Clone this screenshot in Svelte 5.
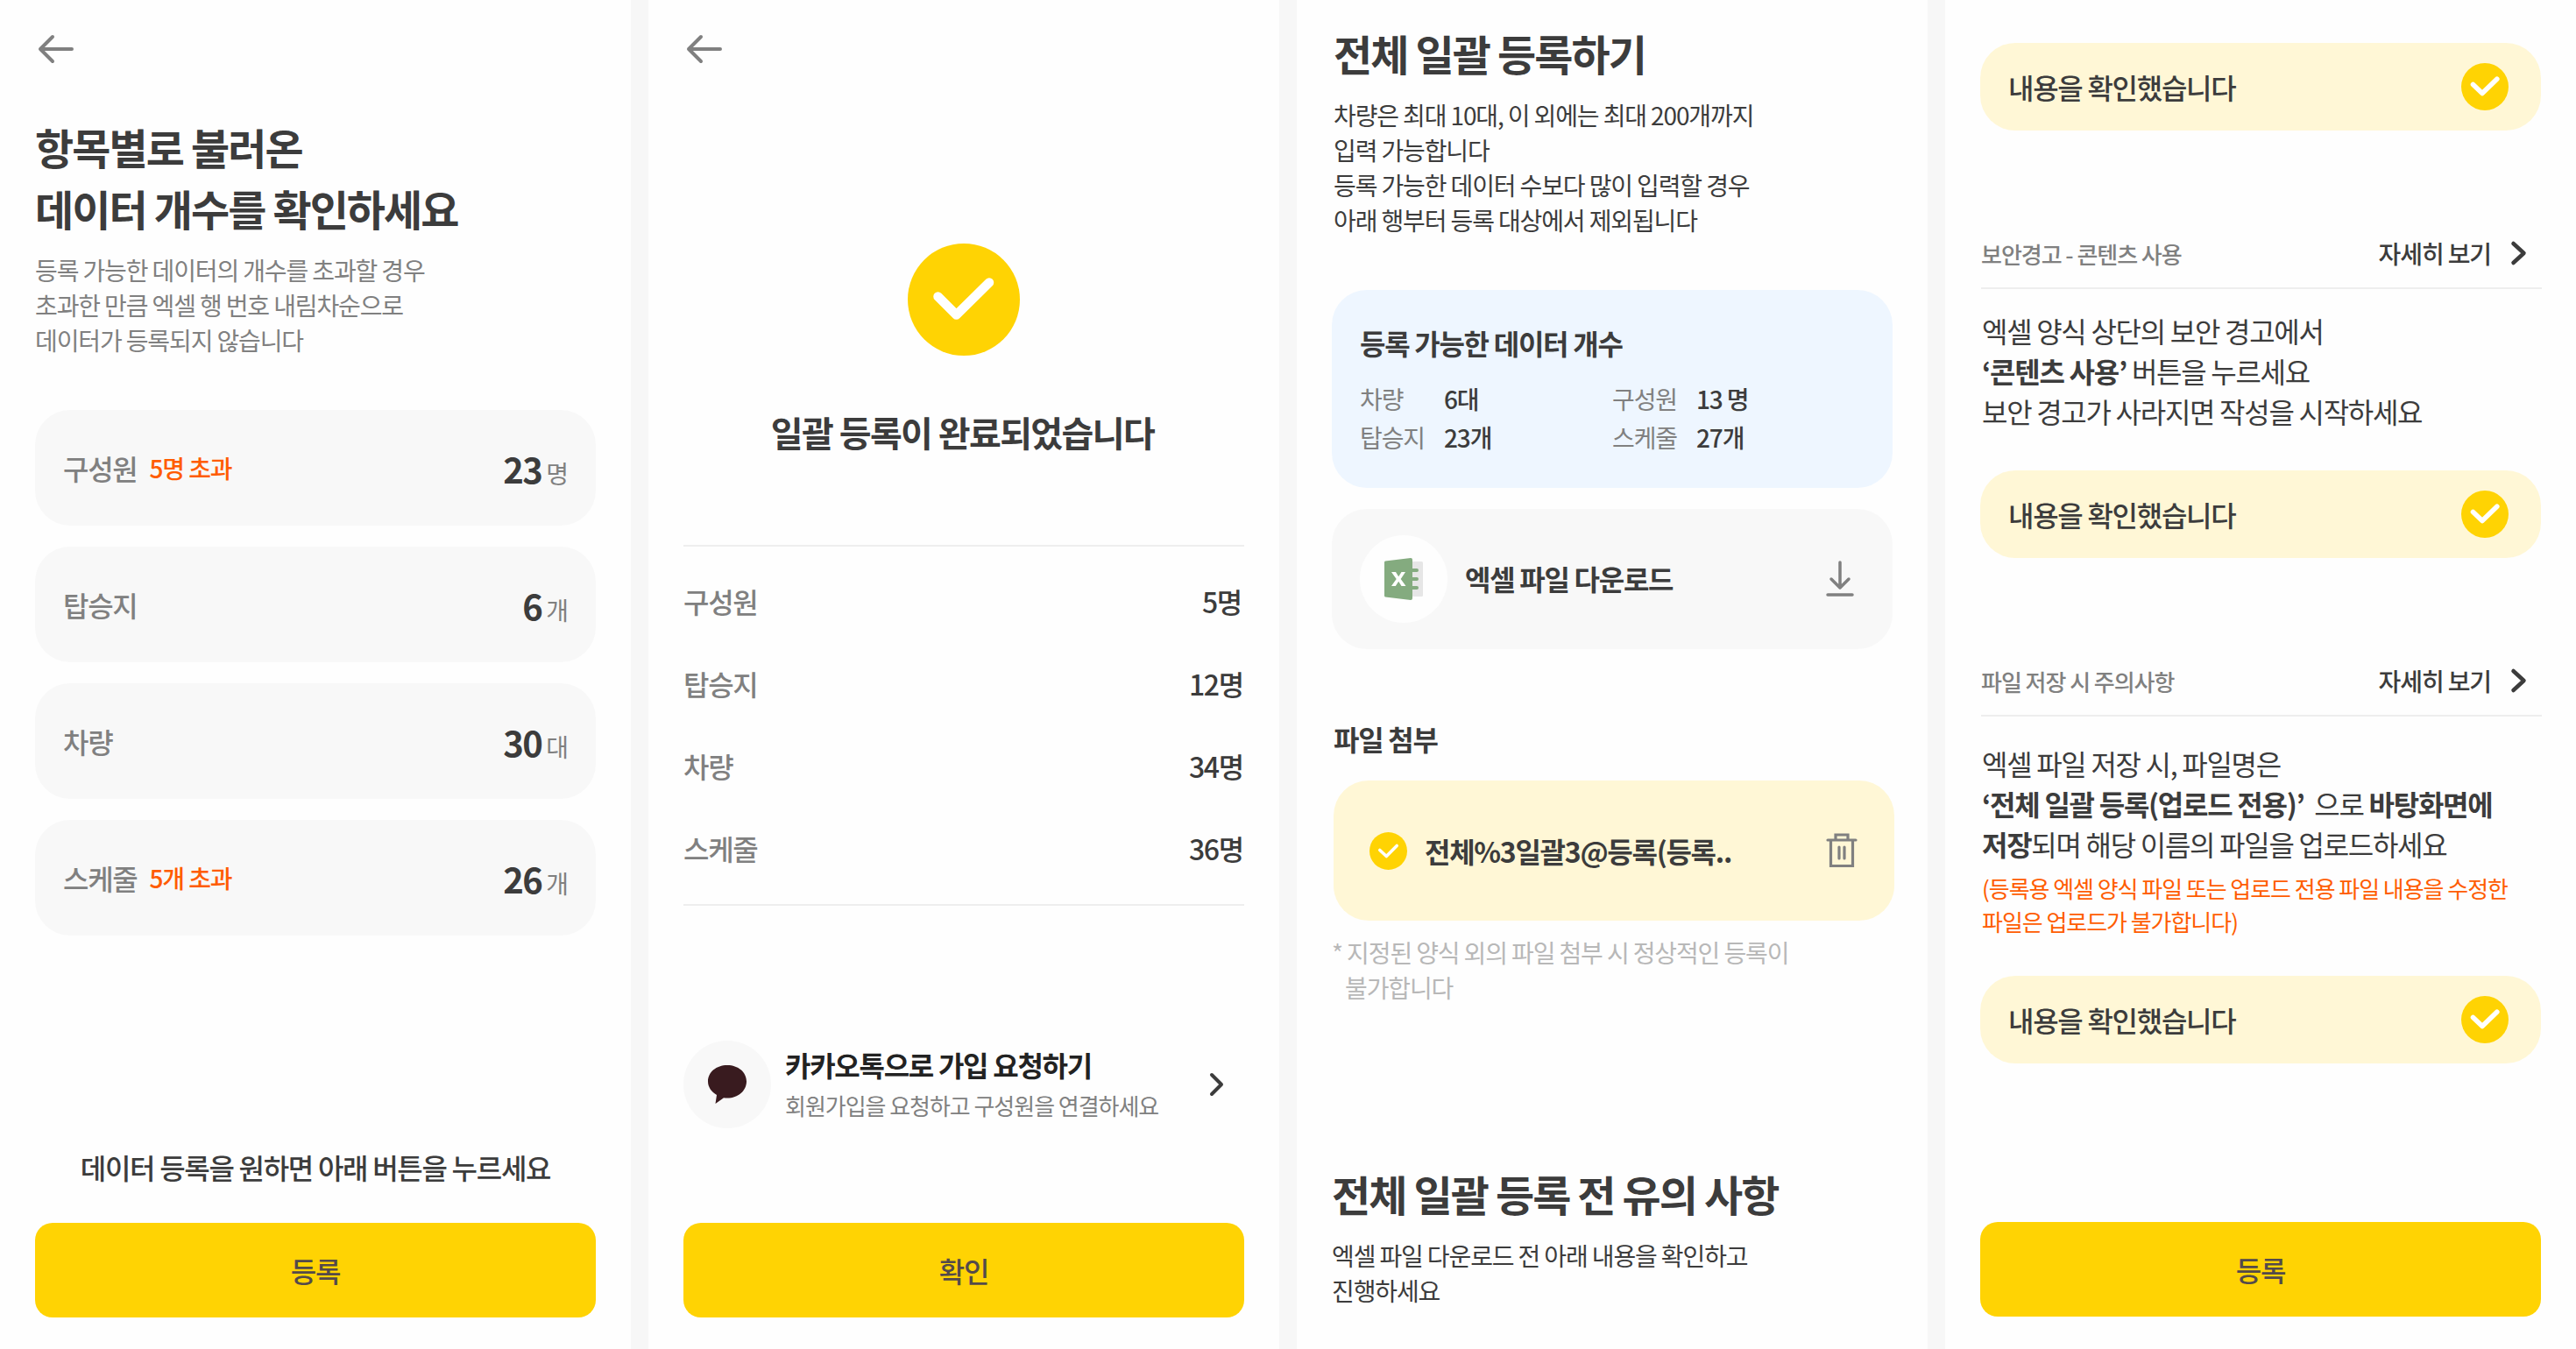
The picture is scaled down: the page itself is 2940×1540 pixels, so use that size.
<script lang="ts">
	const counts = [
		{ label: '구성원', over: '5명 초과', value: 23, unit: '명' },
		{ label: '탑승지', over: '', value: 6, unit: '개' },
		{ label: '차량', over: '', value: 30, unit: '대' },
		{ label: '스케줄', over: '5개 초과', value: 26, unit: '개' }
	];

	const results = [
		{ label: '구성원', value: '5명' },
		{ label: '탑승지', value: '12명' },
		{ label: '차량', value: '34명' },
		{ label: '스케줄', value: '36명' }
	];

	const limits = [
		{ label: '차량', value: '6대' },
		{ label: '구성원', value: '13 명' },
		{ label: '탑승지', value: '23개' },
		{ label: '스케줄', value: '27개' }
	];
</script>

{#snippet backArrow()}
	<svg class="back" width="44" height="36" viewBox="0 0 44 36">
		<path d="M40 18H4M18 4L4 18L18 32" fill="none" stroke="#808080" stroke-width="4" stroke-linecap="round" stroke-linejoin="round" />
	</svg>
{/snippet}

{#snippet confirmed()}
	<div class="confirmed">
		<span>내용을 확인했습니다</span>
		<svg width="54" height="54" viewBox="0 0 54 54">
			<circle cx="27" cy="27" r="27" fill="#ffd303" />
			<path d="M13.500 24.500L24 34.500L40.800 18.200" fill="none" stroke="#fff" stroke-width="5.600" stroke-linecap="round" stroke-linejoin="round" />
		</svg>
	</div>
{/snippet}

{#snippet sectionHead(title: string)}
	<div class="section-head">
		<span class="section-name">{title}</span>
		<span class="more">자세히 보기</span>
		<svg width="20" height="30" viewBox="0 0 20 30">
			<path d="M3.500 4L15.500 15L3.500 26" fill="none" stroke="#3c3c3c" stroke-width="4.500" stroke-linecap="round" stroke-linejoin="round" />
		</svg>
	</div>
{/snippet}

<main class="board">
	<section class="screen">
		{@render backArrow()}
		<h1 class="title count-title">항목별로 불러온<br />데이터 개수를 확인하세요</h1>
		<p class="desc muted">
			등록 가능한 데이터의 개수를 초과할 경우<br />초과한 만큼 엑셀 행 번호 내림차순으로<br />데이터가 등록되지 않습니다
		</p>
		<ul class="counts">
			{#each counts as item}
				<li class="count">
					<span class="count-label">{item.label}</span>
					{#if item.over}
						<span class="over">{item.over}</span>
					{/if}
					<span class="count-value">{item.value}</span>
					<span class="unit">{item.unit}</span>
				</li>
			{/each}
		</ul>
		<div class="footer">
			<p class="hint">데이터 등록을 원하면 아래 버튼을 누르세요</p>
			<button class="primary">등록</button>
		</div>
	</section>

	<section class="screen">
		{@render backArrow()}
		<div class="done">
			<svg width="128" height="128" viewBox="0 0 128 128">
				<circle cx="64" cy="64" r="64" fill="#ffd303" />
				<path d="M34.500 60.500L55.500 81.500L93 44.500" fill="none" stroke="#fff" stroke-width="10.500" stroke-linecap="round" stroke-linejoin="round" />
			</svg>
			<h2 class="done-title">일괄 등록이 완료되었습니다</h2>
		</div>
		<dl class="results">
			{#each results as row}
				<div class="result">
					<dt>{row.label}</dt>
					<dd>{row.value}</dd>
				</div>
			{/each}
		</dl>
		<div class="kakao">
			<div class="kakao-icon">
				<svg width="46" height="46" viewBox="0 0 46 46">
					<path d="M23 1C10.500 1 1 9 1 19.500C1 26 5 31.500 11 35L9.500 45L19 38.300C20.300 38.500 21.600 38.600 23 38.600C35.500 38.600 45 30 45 19.500C45 9 35.500 1 23 1Z" fill="#391b1f" />
				</svg>
			</div>
			<div class="kakao-text">
				<strong>카카오톡으로 가입 요청하기</strong>
				<span>회원가입을 요청하고 구성원을 연결하세요</span>
			</div>
			<svg class="kakao-chevron" width="18" height="28" viewBox="0 0 18 28">
				<path d="M3 3L14 14L3 25" fill="none" stroke="#3c3c3c" stroke-width="4" stroke-linecap="round" stroke-linejoin="round" />
			</svg>
		</div>
		<div class="footer">
			<button class="primary">확인</button>
		</div>
	</section>

	<section class="screen upload">
		<h1 class="title upload-title">전체 일괄 등록하기</h1>
		<p class="desc upload-desc">
			차량은 최대 10대, 이 외에는 최대 200개까지<br />입력 가능합니다<br />등록 가능한 데이터 수보다 많이 입력할 경우<br />아래 행부터 등록 대상에서 제외됩니다
		</p>
		<div class="limits">
			<h3>등록 가능한 데이터 개수</h3>
			<dl>
				{#each limits as limit}
					<dt>{limit.label}</dt>
					<dd>{limit.value}</dd>
				{/each}
			</dl>
		</div>
		<div class="download">
			<div class="excel">
				<svg width="46" height="48" viewBox="0 0 46 48">
					<rect x="28" y="4" width="17" height="40" rx="1.500" fill="#e6e6e6" />
					<path d="M30 14H38M30 24H38M30 34H38" stroke="#84ab7f" stroke-width="4" stroke-linecap="round" />
					<path d="M2 3.500L31 0Q33 0 33 2V46Q33 48 31 48L2 44.500Q1 44.300 1 43V5Q1 3.700 2 3.500Z" fill="#84ab7f" />
					<path d="M9 16H14L17.200 21.300L20.500 16H25L19.700 24L25.500 32H20.500L17.200 26.800L13.800 32H9L14.700 24Z" fill="#fff" />
				</svg>
			</div>
			<span class="download-label">엑셀 파일 다운로드</span>
			<svg width="32" height="42" viewBox="0 0 32 42">
				<path d="M16 2V31M6 21L16 31L26 21M2 39H30" fill="none" stroke="#808080" stroke-width="3.500" stroke-linecap="round" stroke-linejoin="round" />
			</svg>
		</div>
		<h3 class="attach-title">파일 첨부</h3>
		<div class="attached">
			<svg width="43" height="43" viewBox="0 0 43 43">
				<circle cx="21.500" cy="21.500" r="21.500" fill="#ffd303" />
				<path d="M11.800 20.500L19.300 27.500L31.200 15.500" fill="none" stroke="#fff" stroke-width="3.600" stroke-linecap="round" stroke-linejoin="round" />
			</svg>
			<span class="file-name">전체%3일괄3@등록(등록..</span>
			<svg width="38" height="42" viewBox="0 0 38 42">
				<path d="M3 9H35M6.500 9V38.500H31.500V9M12 9V3H26V9M16 17V30M22 17V30" fill="none" stroke="#808080" stroke-width="3.200" stroke-linecap="round" />
			</svg>
		</div>
		<p class="note">* 지정된 양식 외의 파일 첨부 시 정상적인 등록이<br />불가합니다</p>
		<h1 class="title notice-title">전체 일괄 등록 전 유의 사항</h1>
		<p class="desc">엑셀 파일 다운로드 전 아래 내용을 확인하고<br />진행하세요</p>
	</section>

	<section class="screen notices">
		{@render confirmed()}
		{@render sectionHead('보안경고 - 콘텐츠 사용')}
		<p class="body">
			엑셀 양식 상단의 보안 경고에서<br /><b>‘콘텐츠 사용’</b> 버튼을 누르세요<br />보안 경고가 사라지면 작성을 시작하세요
		</p>
		{@render confirmed()}
		{@render sectionHead('파일 저장 시 주의사항')}
		<p class="body save-body">
			엑셀 파일 저장 시, 파일명은<br /><b>‘전체 일괄 등록(업로드 전용)’</b>&nbsp; 으로 <b>바탕화면에</b><br /><b>저장</b>되며 해당 이름의 파일을 업로드하세요
		</p>
		<p class="warning">
			(등록용 엑셀 양식 파일 또는 업로드 전용 파일 내용을 수정한<br />파일은 업로드가 불가합니다)
		</p>
		{@render confirmed()}
		<div class="footer">
			<button class="primary">등록</button>
		</div>
	</section>
</main>

<style>
	:global(body) {
		margin: 0;
		background: #f7f7f7;
	}

	.board {
		display: grid;
		grid-template-columns: repeat(4, 720px);
		gap: 20px;
		width: 2940px;
		height: 1540px;
		overflow: hidden;
		font-family: 'Noto Sans CJK KR', sans-serif;
		color: #3c3c3c;
		white-space: nowrap;
	}

	.board * {
		letter-spacing: -0.04em;
	}

	h1,
	h2,
	h3,
	p,
	ul,
	dl,
	dd {
		margin: 0;
		padding: 0;
	}

	svg {
		display: block;
		flex: none;
	}

	.screen {
		box-sizing: border-box;
		display: flex;
		flex-direction: column;
		height: 1540px;
		padding: 38px 40px 36px;
		background: #fefefe;
	}

	.back {
		margin-left: 2px;
	}

	.title {
		font-size: 48px;
		font-weight: 700;
		line-height: 70px;
	}

	.count-title {
		margin-top: 58px;
	}

	.desc {
		margin-top: 16px;
		font-size: 28px;
		line-height: 40px;
	}

	.muted {
		color: #808080;
	}

	.counts {
		display: flex;
		flex-direction: column;
		gap: 24px;
		margin-top: 60px;
		list-style: none;
	}

	.count {
		display: flex;
		align-items: center;
		height: 132px;
		box-sizing: border-box;
		padding: 0 32px;
		border-radius: 40px;
		background: #f8f8f8;
		color: #808080;
	}

	.count-label {
		font-size: 32px;
		font-weight: 500;
	}

	.over {
		margin-left: 14px;
		font-size: 28px;
		font-weight: 500;
		color: #ff5c00;
	}

	.count-value {
		margin-left: auto;
		padding-top: 1px;
		font-size: 40px;
		font-weight: 700;
		color: #3c3c3c;
	}

	.unit {
		margin-left: 5px;
		padding-top: 12px;
		font-size: 28px;
	}

	.footer {
		margin-top: auto;
	}

	.hint {
		margin-bottom: 41px;
		font-size: 32px;
		font-weight: 500;
		line-height: 46px;
		text-align: center;
	}

	.primary {
		display: block;
		width: 100%;
		height: 108px;
		border: 0;
		border-radius: 20px;
		background: #ffd303;
		font: inherit;
		font-size: 32px;
		font-weight: 500;
		color: #544a4a;
	}

	.done {
		display: flex;
		flex-direction: column;
		align-items: center;
		gap: 58px;
		margin-top: 204px;
	}

	.done-title {
		padding-right: 3px;
		font-size: 40px;
		font-weight: 700;
		line-height: 58px;
	}

	.results {
		display: flex;
		flex-direction: column;
		gap: 48px;
		margin-top: 100px;
		padding: 39px 0 41px;
		border-top: 2px solid #eee;
		border-bottom: 2px solid #eee;
	}

	.result {
		display: flex;
		justify-content: space-between;
		padding-right: 1px;
		font-size: 32px;
		font-weight: 500;
		line-height: 46px;
	}

	.result:first-child {
		padding-right: 3px;
	}

	.result dt {
		color: #808080;
	}

	.kakao {
		display: flex;
		align-items: center;
		margin-top: 154px;
		padding-right: 22px;
	}

	.kakao-icon,
	.excel {
		display: flex;
		align-items: center;
		justify-content: center;
		width: 100px;
		height: 100px;
		border-radius: 50%;
		background: #f8f8f8;
	}

	.kakao-text {
		display: flex;
		flex-direction: column;
		margin-left: 16px;
	}

	.kakao-text strong {
		font-size: 32px;
		line-height: 48px;
		color: #222;
	}

	.kakao-text span {
		font-size: 26px;
		line-height: 46px;
		color: #808080;
	}

	.kakao-chevron {
		margin-left: auto;
	}

	.upload {
		padding-top: 25px;
	}

	.upload-title,
	.upload-desc,
	.attach-title {
		margin-left: 2px;
	}

	.limits {
		box-sizing: border-box;
		height: 226px;
		margin-top: 60px;
		padding: 37px 32px;
		border-radius: 40px;
		background: #eef6ff;
	}

	.limits h3,
	.attach-title {
		font-size: 32px;
		font-weight: 700;
		line-height: 46px;
	}

	.limits dl {
		display: grid;
		grid-template-columns: 96px 192px 96px 192px;
		margin-top: 19px;
		font-size: 28px;
		line-height: 44px;
	}

	.limits dt {
		color: #808080;
	}

	.limits dd {
		font-weight: 500;
	}

	.download {
		box-sizing: border-box;
		display: flex;
		align-items: center;
		height: 160px;
		margin-top: 24px;
		padding: 0 44px 0 32px;
		border-radius: 40px;
		background: #f8f8f8;
	}

	.excel {
		background: #fefefe;
	}

	.download-label {
		margin: 0 auto 0 20px;
		padding-bottom: 3px;
		font-size: 32px;
		font-weight: 700;
	}

	.attach-title {
		margin-top: 79px;
	}

	.attached {
		box-sizing: border-box;
		display: flex;
		align-items: center;
		height: 160px;
		margin: 25px -2px 0 2px;
		padding: 0 41px;
		border-radius: 40px;
		background: #fff7d6;
	}

	.file-name {
		margin: 0 auto 0 20px;
		font-size: 32px;
		font-weight: 700;
	}

	.note {
		margin-top: 16px;
		padding-left: 15px;
		font-size: 28px;
		line-height: 40px;
		text-indent: -15px;
		color: #b8b8b8;
	}

	.notice-title {
		margin-top: 180px;
	}

	.notices {
		padding-top: 49px;
		padding-bottom: 37px;
	}

	.confirmed {
		box-sizing: border-box;
		display: flex;
		align-items: center;
		justify-content: space-between;
		flex: none;
		height: 100px;
		padding: 0 37px 0 32px;
		border-radius: 40px;
		background: #fff7d6;
		font-size: 32px;
		font-weight: 500;
	}

	.section-head {
		display: flex;
		align-items: center;
		height: 78px;
		margin: 101px -1px 0 1px;
		border-bottom: 2px solid #eee;
		padding-right: 16px;
	}

	.section-name {
		font-size: 26px;
		font-weight: 500;
		color: #808080;
	}

	.more {
		margin: 0 22px 0 auto;
		font-size: 28px;
		font-weight: 500;
	}

	.body {
		margin: 24px 0 45px 2px;
		font-size: 32px;
		line-height: 46px;
	}

	.save-body {
		margin: 30px 0 0 2px;
	}

	.warning {
		margin: 9px 0 43px 2px;
		font-size: 26px;
		line-height: 38px;
		color: #ff5c00;
	}
</style>
